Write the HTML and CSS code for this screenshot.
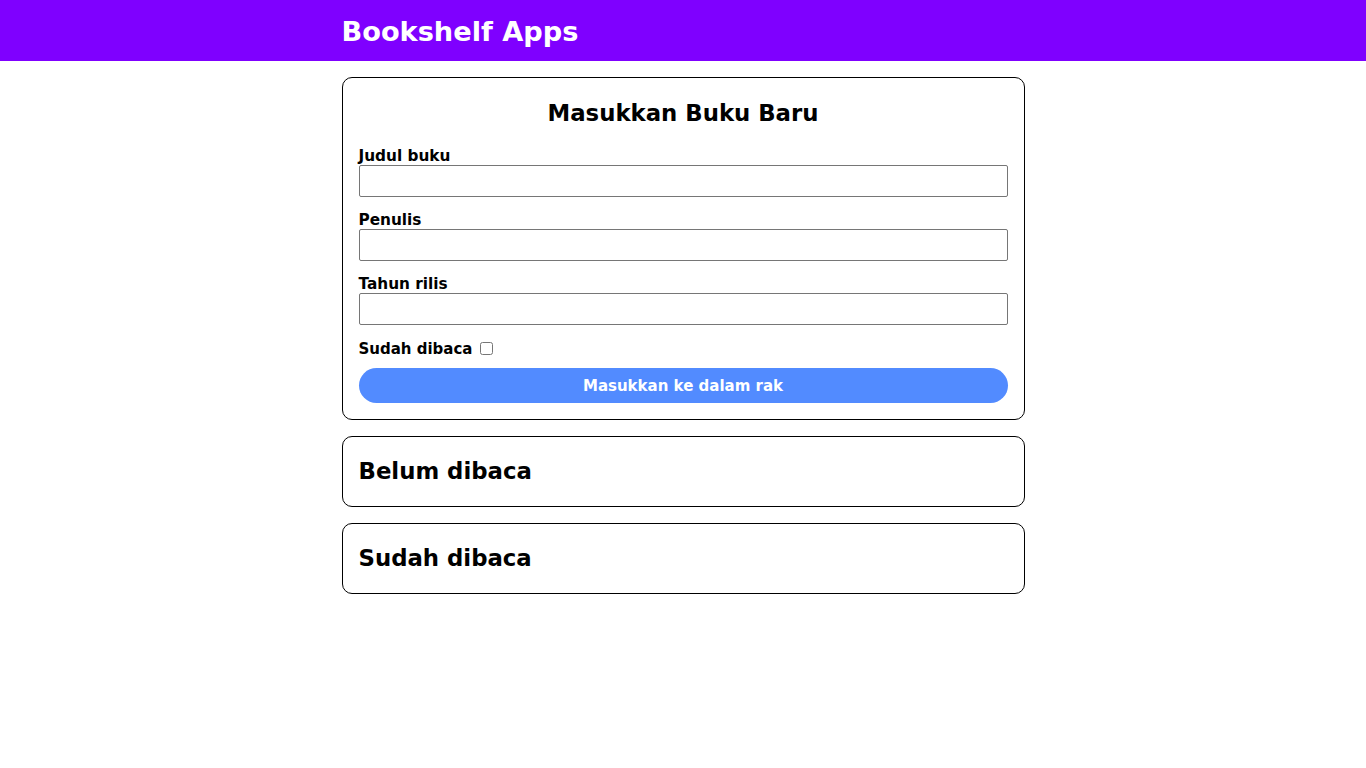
FILE: index.html
```html
<!DOCTYPE html>
<html lang="id">
<head>
<meta charset="utf-8">
<title>Bookshelf Apps</title>
<link rel="stylesheet" href="styles.css">
</head>
<body>
<header class="head-bar">
  <h1 class="head-title">Bookshelf Apps</h1>
</header>
<main class="main">
  <section class="card input-section">
    <h2 class="form-title">Masukkan Buku Baru</h2>
    <form class="book-form">
      <div class="field">
        <label class="field-label" for="inputBookTitle">Judul buku</label>
        <input class="field-input" id="inputBookTitle" type="text">
      </div>
      <div class="field">
        <label class="field-label" for="inputBookAuthor">Penulis</label>
        <input class="field-input" id="inputBookAuthor" type="text">
      </div>
      <div class="field">
        <label class="field-label" for="inputBookYear">Tahun rilis</label>
        <input class="field-input" id="inputBookYear" type="number">
      </div>
      <div class="check-row">
        <label class="field-label" for="inputBookIsComplete">Sudah dibaca</label>
        <input class="check" id="inputBookIsComplete" type="checkbox">
      </div>
      <button class="submit-btn" type="submit">Masukkan ke dalam rak</button>
    </form>
  </section>
  <section class="card shelf">
    <h2 class="shelf-title">Belum dibaca</h2>
  </section>
  <section class="card shelf">
    <h2 class="shelf-title">Sudah dibaca</h2>
  </section>
</main>
</body>
</html>
```
FILE: styles.css
```css
* { box-sizing: border-box; }
body {
  margin: 0;
  font-family: "DejaVu Sans", sans-serif;
  color: #000;
  background: #fff;
}
.head-bar {
  background: #7f00ff;
  height: 61px;
  display: flex;
  align-items: center;
  padding-top: 2px;
}
.head-title {
  width: 50%;
  margin: 0 auto;
  color: #fff;
  font-size: 27.2px;
  font-weight: bold;
  line-height: 34px;
}
.main {
  width: 50%;
  margin: 16px auto 0;
  display: flex;
  flex-direction: column;
  gap: 16px;
}
.card {
  border: 1px solid #000;
  border-radius: 10px;
  padding: 16px;
}
.form-title {
  margin: 0 0 14px;
  text-align: center;
  font-size: 22.8px;
  line-height: 38px;
}
.book-form {
  display: flex;
  flex-direction: column;
}
.field {
  display: flex;
  flex-direction: column;
  margin-bottom: 13px;
}
.field-label {
  font-size: 15.3px;
  font-weight: bold;
  line-height: 18px;
  padding-top: 1px;
}
.field-input {
  height: 32px;
  border: 1px solid #767676;
  border-radius: 2px;
  font-size: 16px;
  padding: 4px 6px;
}
.check-row {
  display: flex;
  align-items: center;
  gap: 7px;
  height: 20px;
  margin-bottom: 10px;
}
.check-row .field-label {
  font-size: 15px;
  padding-top: 2px;
}
.check {
  margin: 0;
  width: 13px;
  height: 13px;
}
.submit-btn {
  height: 35px;
  border: none;
  border-radius: 18px;
  background: #528bff;
  color: #fff;
  font-family: inherit;
  font-size: 15px;
  font-weight: bold;
}
.shelf-title {
  margin: 0;
  font-size: 22.8px;
  line-height: 37px;
}
```
